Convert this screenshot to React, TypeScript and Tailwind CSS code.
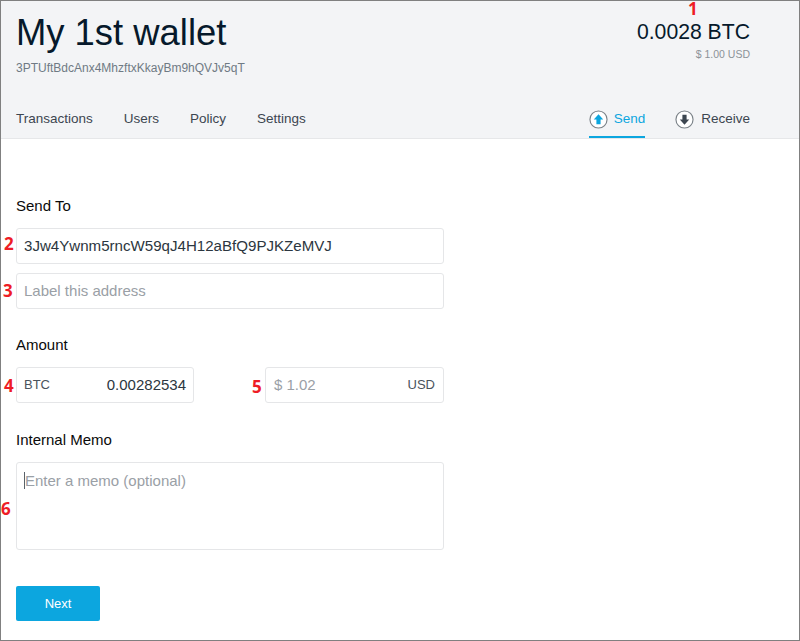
import React from "react";

const Marker = ({ className, children }: { className: string; children: React.ReactNode }) => (
  <span className={`absolute font-['Open_Sans',sans-serif] text-[17px] leading-[14px] font-bold text-[#ee1c25] ${className}`}>
    {children}
  </span>
);

const CircleArrow = ({ up, color }: { up?: boolean; color: string }) => (
  <svg width="19" height="19" viewBox="0 0 20 20" className="shrink-0">
    <circle cx="10" cy="10" r="9" fill="#fff" stroke="#7b8288" strokeWidth="1.2" />
    <path
      d={up ? "M10 4.5 15 10h-2.8v5H7.8v-5H5z" : "M10 15.5 15 10h-2.8V5H7.8v5H5z"}
      fill={color}
    />
  </svg>
);

export default function App() {
  return (
    <div className="relative flex h-[641px] w-[800px] flex-col border border-[#808080] bg-white font-['Liberation_Sans',Arial,sans-serif]">
      <header className="h-[138px] shrink-0 border-b border-[#e6e7e9] bg-[#f3f4f6] pr-[49px] pl-[15px]">
        <div className="flex h-[98px] justify-between">
          <div className="pt-[11px]">
            <h1 className="text-[36.4px] leading-[42px] text-[#06192b]">My 1st wallet</h1>
            <p className="mt-[6px] text-[12px] leading-[16px] text-[#6f7a84]">3PTUftBdcAnx4MhzftxKkayBm9hQVJv5qT</p>
          </div>
          <div className="pt-[19px] text-right">
            <p className="text-[21.2px] leading-[24px] text-[#06192b]">0.0028 BTC</p>
            <p className="mt-[3px] text-[10.5px] leading-[14px] text-[#8c9298]">$ 1.00 USD</p>
          </div>
        </div>
        <nav className="flex h-[39px] justify-between text-[13.5px] text-[#3c4650]">
          <div className="flex gap-[31px] pt-[12px] leading-[16px]">
            <a>Transactions</a>
            <a>Users</a>
            <a>Policy</a>
            <a>Settings</a>
          </div>
          <div className="flex gap-[30px]">
            <a className="flex h-[39px] items-center gap-[6px] border-b-2 border-[#0ca6df] pt-[3px] font-medium text-[#0ca6df]">
              <CircleArrow up color="#0ca6df" />
              Send
            </a>
            <a className="flex h-[39px] items-center gap-[7px] pt-[2px]">
              <CircleArrow color="#3c4650" />
              Receive
            </a>
          </div>
        </nav>
      </header>

      <main className="flex w-[443px] flex-col pt-[59px] pl-[15px]">
        <label className="text-[15px] leading-[16px] text-[#0a0a0a]">Send To</label>
        <div className="mt-[14px] flex h-9 items-center rounded-[3px] border border-[#e5e6e8] px-[7px] text-[15.1px] text-[#2c3640]">
          3Jw4Ywnm5rncW59qJ4H12aBfQ9PJKZeMVJ
        </div>
        <div className="mt-[9px] flex h-9 items-center rounded-[3px] border border-[#e5e6e8] px-[7px] text-[15px] text-[#9aa0a6]">
          Label this address
        </div>

        <label className="mt-[28px] text-[15px] leading-[16px] text-[#0a0a0a]">Amount</label>
        <div className="mt-[14px] flex justify-between">
          <div className="flex h-9 w-[178px] items-center justify-between rounded-[3px] border border-[#e5e6e8] px-[7px]">
            <span className="text-[13px] text-[#4a535c]">BTC</span>
            <span className="text-[15px] text-[#2c3640]">0.00282534</span>
          </div>
          <div className="flex h-9 w-[179px] items-center justify-between rounded-[3px] border border-[#e5e6e8] px-[8px]">
            <span className="text-[15px] text-[#9aa0a6]">$ 1.02</span>
            <span className="text-[13px] text-[#4a535c]">USD</span>
          </div>
        </div>

        <label className="mt-[29px] text-[15px] leading-[16px] text-[#0a0a0a]">Internal Memo</label>
        <div className="mt-[14px] h-[88px] rounded-[3px] border border-[#e5e6e8] px-[7px] pt-[9px] text-[15px] leading-[18px] text-[#9aa0a6]">
          <span className="border-l border-[#5a626a]">Enter a memo (optional)</span>
        </div>

        <button className="mt-[36px] h-[35px] w-[84px] rounded-[2px] bg-[#0ca6df] text-[13px] text-white">Next</button>
      </main>

      <Marker className="top-[1px] left-[687px]">1</Marker>
      <Marker className="top-[236px] left-[3px]">2</Marker>
      <Marker className="top-[283px] left-[2px]">3</Marker>
      <Marker className="top-[378px] left-[3px]">4</Marker>
      <Marker className="top-[379px] left-[251px]">5</Marker>
      <Marker className="top-[501px] left-[0px]">6</Marker>
    </div>
  );
}
